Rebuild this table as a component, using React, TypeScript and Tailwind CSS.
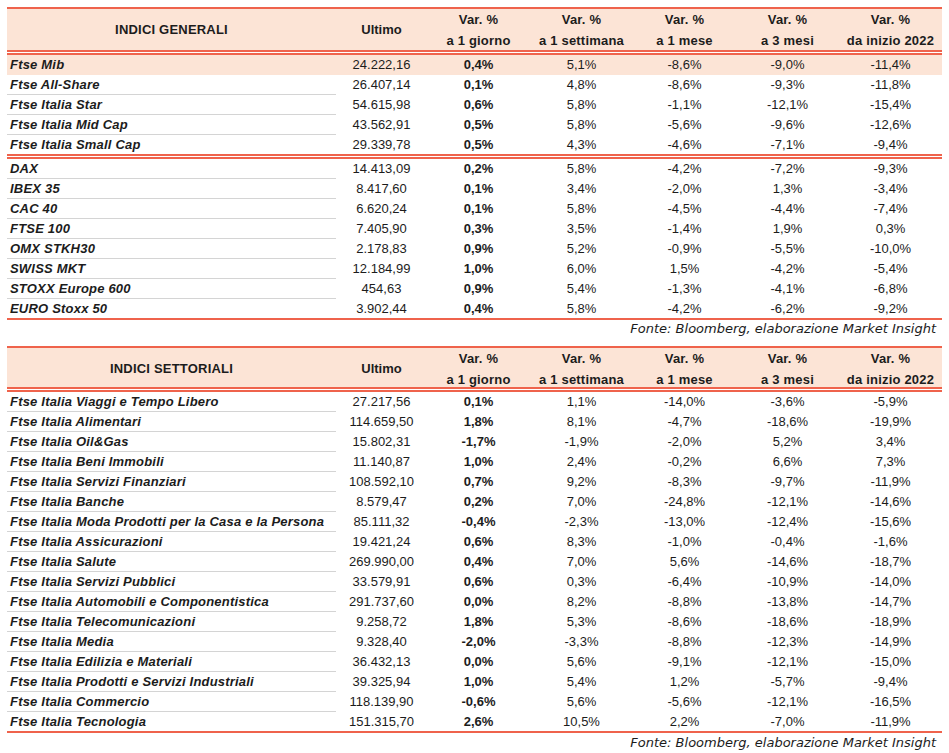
type Row = [string, string, string, string, string, string, string];

const generali: Row[][] = [
  [
    ["Ftse Mib", "24.222,16", "0,4%", "5,1%", "-8,6%", "-9,0%", "-11,4%"],
    ["Ftse All-Share", "26.407,14", "0,1%", "4,8%", "-8,6%", "-9,3%", "-11,8%"],
    ["Ftse Italia Star", "54.615,98", "0,6%", "5,8%", "-1,1%", "-12,1%", "-15,4%"],
    ["Ftse Italia Mid Cap", "43.562,91", "0,5%", "5,8%", "-5,6%", "-9,6%", "-12,6%"],
    ["Ftse Italia Small Cap", "29.339,78", "0,5%", "4,3%", "-4,6%", "-7,1%", "-9,4%"],
  ],
  [
    ["DAX", "14.413,09", "0,2%", "5,8%", "-4,2%", "-7,2%", "-9,3%"],
    ["IBEX 35", "8.417,60", "0,1%", "3,4%", "-2,0%", "1,3%", "-3,4%"],
    ["CAC 40", "6.620,24", "0,1%", "5,8%", "-4,5%", "-4,4%", "-7,4%"],
    ["FTSE 100", "7.405,90", "0,3%", "3,5%", "-1,4%", "1,9%", "0,3%"],
    ["OMX STKH30", "2.178,83", "0,9%", "5,2%", "-0,9%", "-5,5%", "-10,0%"],
    ["SWISS MKT", "12.184,99", "1,0%", "6,0%", "1,5%", "-4,2%", "-5,4%"],
    ["STOXX Europe 600", "454,63", "0,9%", "5,4%", "-1,3%", "-4,1%", "-6,8%"],
    ["EURO Stoxx 50", "3.902,44", "0,4%", "5,8%", "-4,2%", "-6,2%", "-9,2%"],
  ],
];

const settoriali: Row[][] = [
  [
    ["Ftse Italia Viaggi e Tempo Libero", "27.217,56", "0,1%", "1,1%", "-14,0%", "-3,6%", "-5,9%"],
    ["Ftse Italia Alimentari", "114.659,50", "1,8%", "8,1%", "-4,7%", "-18,6%", "-19,9%"],
    ["Ftse Italia Oil&Gas", "15.802,31", "-1,7%", "-1,9%", "-2,0%", "5,2%", "3,4%"],
    ["Ftse Italia Beni Immobili", "11.140,87", "1,0%", "2,4%", "-0,2%", "6,6%", "7,3%"],
    ["Ftse Italia Servizi Finanziari", "108.592,10", "0,7%", "9,2%", "-8,3%", "-9,7%", "-11,9%"],
    ["Ftse Italia Banche", "8.579,47", "0,2%", "7,0%", "-24,8%", "-12,1%", "-14,6%"],
    ["Ftse Italia Moda Prodotti per la Casa e la Persona", "85.111,32", "-0,4%", "-2,3%", "-13,0%", "-12,4%", "-15,6%"],
    ["Ftse Italia Assicurazioni", "19.421,24", "0,6%", "8,3%", "-1,0%", "-0,4%", "-1,6%"],
    ["Ftse Italia Salute", "269.990,00", "0,4%", "7,0%", "5,6%", "-14,6%", "-18,7%"],
    ["Ftse Italia Servizi Pubblici", "33.579,91", "0,6%", "0,3%", "-6,4%", "-10,9%", "-14,0%"],
    ["Ftse Italia Automobili e Componentistica", "291.737,60", "0,0%", "8,2%", "-8,8%", "-13,8%", "-14,7%"],
    ["Ftse Italia Telecomunicazioni", "9.258,72", "1,8%", "5,3%", "-8,6%", "-18,6%", "-18,9%"],
    ["Ftse Italia Media", "9.328,40", "-2,0%", "-3,3%", "-8,8%", "-12,3%", "-14,9%"],
    ["Ftse Italia Edilizia e Materiali", "36.432,13", "0,0%", "5,6%", "-9,1%", "-12,1%", "-15,0%"],
    ["Ftse Italia Prodotti e Servizi Industriali", "39.325,94", "1,0%", "5,4%", "1,2%", "-5,7%", "-9,4%"],
    ["Ftse Italia Commercio", "118.139,90", "-0,6%", "5,6%", "-5,6%", "-12,1%", "-16,5%"],
    ["Ftse Italia Tecnologia", "151.315,70", "2,6%", "10,5%", "2,2%", "-7,0%", "-11,9%"],
  ],
];

const cols = "grid grid-cols-[329px_91px_103px_103px_103px_103px_103px]";
const periods = ["a 1 giorno", "a 1 settimana", "a 1 mese", "a 3 mesi", "da inizio 2022"];

const Header = ({ title, tall }: { title: string; tall: boolean }) => (
  <div className={`${cols} ${tall ? "h-[41px]" : "h-[39px]"} items-center bg-[#fce4d6] text-center font-bold`}>
    <div className="tracking-[0.2px]">{title}</div>
    <div>Ultimo</div>
    {periods.map((p) => (
      <div key={p} className="leading-[21px] tracking-[0.2px]">
        <div>Var. %</div>
        <div>{p}</div>
      </div>
    ))}
  </div>
);

const DoubleRule = () => (
  <div>
    <div className="h-[2px] bg-[#ef634c]" />
    <div className="h-px" />
    <div className="h-[2px] bg-[#ef634c]" />
  </div>
);

const DataRow = ({ row, last, highlight }: { row: Row; last: boolean; highlight: boolean }) => (
  <div className={`${cols} ${last ? "h-[19px]" : "h-[20px]"} ${highlight ? "bg-[#fce4d6]" : ""} items-stretch text-center`}>
    <div
      className={`pl-[3px] text-left font-bold italic leading-[19px] tracking-[0.2px] ${
        last ? "" : highlight ? "border-b border-[#fce4d6]" : "border-b border-[#d4d4d4]"
      }`}
    >
      {row[0]}
    </div>
    <div className="leading-[19px]">{row[1]}</div>
    <div className="font-bold leading-[19px]">{row[2]}</div>
    <div className="leading-[19px]">{row[3]}</div>
    <div className="leading-[19px]">{row[4]}</div>
    <div className="leading-[19px]">{row[5]}</div>
    <div className="leading-[19px]">{row[6]}</div>
  </div>
);

const Table = ({ title, groups, tall, highlightFirst }: { title: string; groups: Row[][]; tall: boolean; highlightFirst: boolean }) => (
  <div>
    <div className="h-[2px] bg-[#ef634c]" />
    <Header title={title} tall={tall} />
    {groups.map((g, gi) => (
      <div key={gi}>
        <DoubleRule />
        {g.map((r, ri) => (
          <DataRow key={r[0]} row={r} last={ri === g.length - 1} highlight={highlightFirst && gi === 0 && ri === 0} />
        ))}
      </div>
    ))}
    <div className="h-[2px] bg-[#ef634c]" />
  </div>
);

const Source = ({ className }: { className: string }) => (
  <div className={`${className} pr-[6px] text-right font-['DejaVu_Sans',sans-serif] text-[13px] italic leading-[15px]`}>
    Fonte: Bloomberg, elaborazione Market Insight
  </div>
);

export default function App() {
  return (
    <div className="h-[753px] w-[949px] overflow-hidden bg-white px-[7px] pt-[7px] font-['Liberation_Sans',Arial,sans-serif] text-[13px] text-[#1c1c1c]">
      <Table title="INDICI GENERALI" groups={generali} tall highlightFirst />
      <Source className="h-[26px] pt-px" />
      <Table title="INDICI SETTORIALI" groups={settoriali} tall={false} highlightFirst={false} />
      <Source className="pt-[2px]" />
    </div>
  );
}
